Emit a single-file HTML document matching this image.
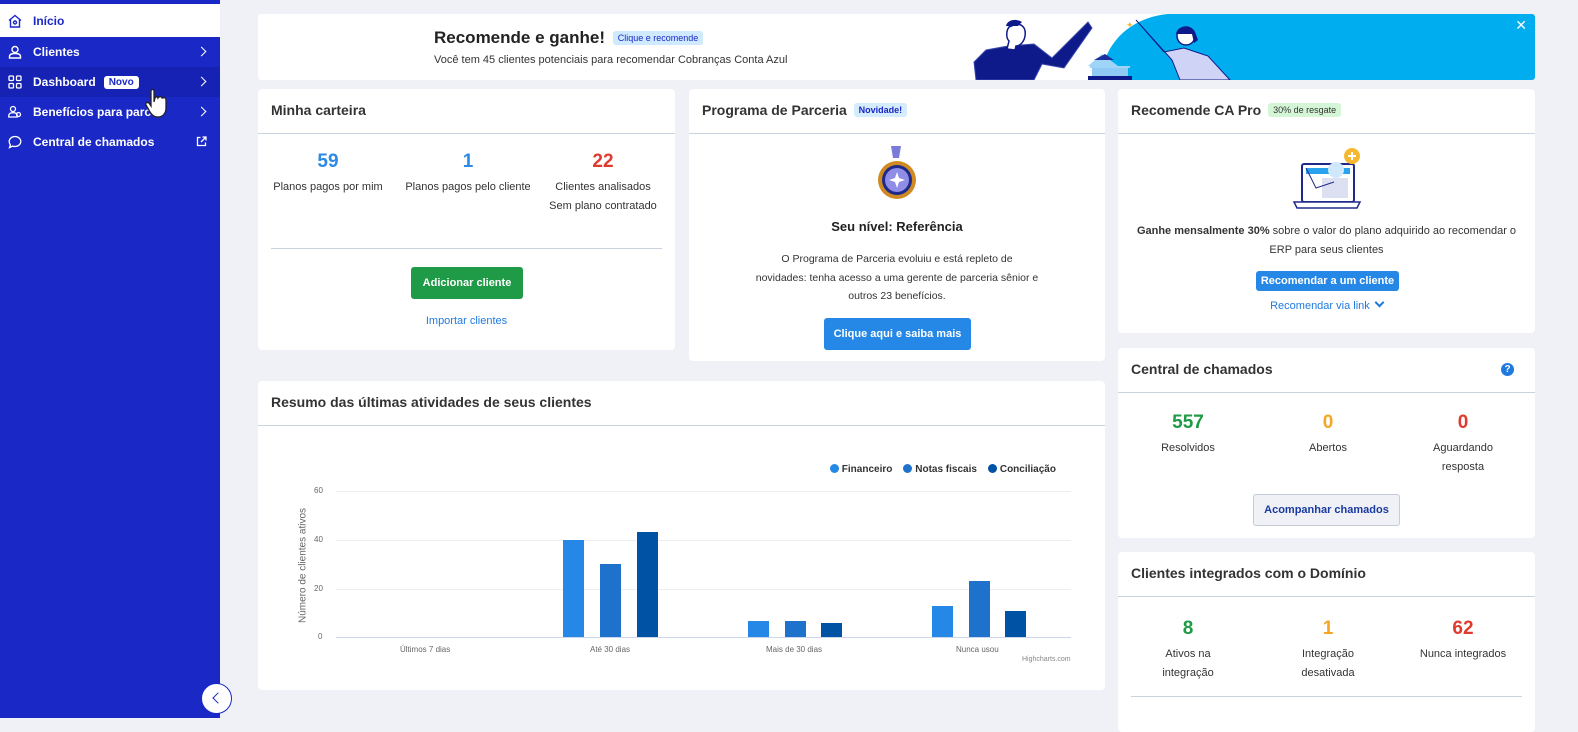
<!DOCTYPE html>
<html><head><meta charset="utf-8"><style>
*{box-sizing:border-box;margin:0;padding:0}
body{width:1578px;height:718px;overflow:hidden;background:#eff1f6;font-family:"Liberation Sans",sans-serif;color:#2b2f3a;position:relative}
.sb{position:absolute;left:0;top:0;width:220px;height:718px;background:#1a28c6}
.sb .it{position:absolute;left:0;width:220px;height:30px;color:#fff;font-size:12px;font-weight:bold;display:flex;align-items:center;padding-left:33px}
.sb .it svg{position:absolute;left:8px;top:8px}
.chev{position:absolute;right:15px;top:11px;width:7px;height:7px;border-right:1.6px solid #fff;border-top:1.6px solid #fff;transform:rotate(45deg)}
.card{position:absolute;background:#fff;border-radius:4px}
.hd{height:45px;border-bottom:1px solid #c9d3e0;padding:13px 13px;font-size:14px;font-weight:bold;color:#333}
.tag{display:inline-block;font-size:9px;padding:2px 5px;border-radius:3px;vertical-align:2px;margin-left:3px;font-weight:bold}
.c{text-align:center;position:absolute}
.num{font-size:19px;font-weight:bold}
.lbl{font-size:11px;color:#333;line-height:19px}
.btn{position:absolute;border-radius:3px;color:#fff;font-size:11px;font-weight:bold;text-align:center}
.link{position:absolute;color:#1f7ae0;font-size:11px;text-align:center}
.ax{position:absolute;font-size:8px;color:#666}
</style></head><body>
<div class="sb">
 <div style="position:absolute;left:0;top:4px;width:220px;height:33px;background:#fff"></div>
 <div class="it" style="top:6px;color:#1a28c6"><svg width="14" height="14" viewBox="0 0 14 14" fill="none" stroke="#1a28c6" stroke-width="1.4"><path d="M1 6.5 7 1.5l6 5M2.5 5.5V13h9V5.5"/><circle cx="7" cy="8.5" r="1.5"/></svg>Início</div>
 <div class="it" style="top:37px"><svg width="14" height="14" viewBox="0 0 14 14" fill="none" stroke="#fff" stroke-width="1.4"><circle cx="7" cy="4.5" r="3"/><path d="M1.5 13v-1.5c0-2 2-3 5.5-3s5.5 1 5.5 3V13z"/></svg>Clientes<span class="chev"></span></div>
 <div style="position:absolute;left:0;top:67px;width:220px;height:30px;background:#1622b3"></div>
 <div class="it" style="top:67px"><svg width="14" height="14" viewBox="0 0 14 14" fill="none" stroke="#fff" stroke-width="1.3"><rect x="1" y="1" width="4.5" height="4.5" rx="1"/><rect x="8.5" y="1" width="4.5" height="4.5" rx="1"/><rect x="1" y="8.5" width="4.5" height="4.5" rx="1"/><rect x="8.5" y="8.5" width="4.5" height="4.5" rx="1"/></svg>Dashboard<span style="background:#fff;color:#1a28c6;font-size:10px;padding:1px 5px;border-radius:3px;margin-left:8px">Novo</span><span class="chev"></span></div>
 <div class="it" style="top:97px"><svg width="14" height="14" viewBox="0 0 14 14" fill="none" stroke="#fff" stroke-width="1.3"><circle cx="5" cy="4" r="2.5"/><path d="M0.8 12v-1.5c0-1.7 1.7-2.8 4.2-2.8s4.2 1 4.2 2.8V12z"/><circle cx="10.5" cy="9.5" r="2"/></svg>Benefícios para parcei<span class="chev"></span></div>
 <div class="it" style="top:127px"><svg width="14" height="14" viewBox="0 0 14 14" fill="none" stroke="#fff" stroke-width="1.3"><path d="M7 1.5c3.3 0 5.8 2.2 5.8 5s-2.5 5-5.8 5c-.8 0-1.6-.1-2.3-.4L1.5 12.5l.9-2.6C1.6 9 1.2 7.8 1.2 6.5c0-2.8 2.5-5 5.8-5z"/></svg>Central de chamados<svg style="left:196px;top:9px" width="11" height="11" viewBox="0 0 11 11" fill="none" stroke="#fff" stroke-width="1.3"><path d="M4.5 1.5H1.5v8h8V6.5M6.5 1h3.5v3.5M10 1 5 6"/></svg></div>
 <svg style="position:absolute;left:143px;top:88px" width="26" height="34" viewBox="0 0 26 34"><path d="M8 3c0-2 3-2 3 0v11l1-4c1-2 3-1 3 0l1-1c1-1 3 0 3 1l1 0c1-1 3 0 3 2v8c0 5-3 9-8 9-4 0-6-2-8-5L3 17c-1-2 1-3 3-2l2 3z" fill="#fff" stroke="#222" stroke-width="1.3"/></svg>
 <div style="position:absolute;left:201px;top:683px;width:31px;height:31px;border-radius:50%;background:#fff;border:1.5px solid #1a28c6"></div>
 <div style="position:absolute;left:214px;top:694px;width:8px;height:8px;border-left:1.8px solid #1a28c6;border-bottom:1.8px solid #1a28c6;transform:rotate(45deg)"></div>
</div>

<!-- banner -->
<div class="card" style="left:258px;top:14px;width:1277px;height:66px;overflow:hidden;border-radius:3px">
 <svg style="position:absolute;left:0;top:0" width="1277" height="66"><path d="M842 66C846 30 870 4 910 0H1277V66z" fill="#00aeef"/></svg>
 <div style="position:absolute;left:176px;top:14px;font-size:17px;font-weight:bold;color:#222">Recomende e ganhe! <span class="tag" style="background:#cfe9ff;color:#1a28c6;font-weight:normal;font-size:9px">Clique e recomende</span></div>
 <div style="position:absolute;left:176px;top:40px;font-size:11px;color:#333">Você tem 45 clientes potenciais para recomendar Cobranças Conta Azul</div>
 <svg style="position:absolute;left:710px;top:0" width="290" height="66" viewBox="0 0 290 66">
  <path d="M8 66 6 48 18 36 40 32 66 30 84 44 120 8 124 14 96 54 74 50 66 66z" fill="#0f1a8a" stroke="#3a4ab0"/>
  <path d="M48 10c8 0 10 6 9 12-1 6-5 10-9 10l-1 4-8-1 2-8c-3-3-3-10 0-14z" fill="#fff" stroke="#0f1a8a" stroke-width="1.5"/>
  <path d="M38 12c1-6 10-8 16-4l-4 4z" fill="#0f1a8a"/>
  <path d="M120 52 134 40 150 52z" fill="#9ed4f7"/><path d="M126 46 137 40 146 46z" fill="#1c2f9c"/><rect x="122" y="52" width="40" height="2" fill="#9ed4f7"/><rect x="124" y="54" width="36" height="8" fill="#8fcaf5"/><rect x="120" y="62" width="44" height="4" fill="#0f1a8a"/>
  <path d="M168 6 196 38 216 34 240 42 262 66 212 66 204 46z" fill="#cfd3f5" stroke="#0f1a8a"/>
  <circle cx="218" cy="22" r="9" fill="#fff" stroke="#0f1a8a" stroke-width="1.5"/><path d="M208 20c1-9 15-10 19-2l3 8-4 3-2-9z" fill="#0f1a8a"/>
  <text x="158" y="14" fill="#f5b82e" font-size="9">✦</text>
 </svg>
 <div style="position:absolute;right:8px;top:3px;color:#fff;font-size:14px">✕</div>
</div>

<!-- Minha carteira -->
<div class="card" style="left:258px;top:89px;width:417px;height:261px">
 <div class="hd">Minha carteira</div>
 <div class="c" style="left:10px;width:120px;top:62px"><div class="num" style="color:#2b8ae6">59</div><div class="lbl" style="margin-top:5px">Planos pagos por mim</div></div>
 <div class="c" style="left:145px;width:130px;top:62px"><div class="num" style="color:#2b8ae6">1</div><div class="lbl" style="margin-top:5px">Planos pagos pelo cliente</div></div>
 <div class="c" style="left:280px;width:130px;top:62px"><div class="num" style="color:#e03a2e">22</div><div class="lbl" style="margin-top:5px">Clientes analisados<br>Sem plano contratado</div></div>
 <div style="position:absolute;left:13px;right:13px;top:159px;border-top:1px solid #c9d3e0"></div>
 <div class="btn" style="left:153px;top:178px;width:112px;height:32px;line-height:32px;background:#1f9a46">Adicionar cliente</div>
 <div class="link" style="left:0;width:417px;top:226px">Importar clientes</div>
</div>

<!-- Programa -->
<div class="card" style="left:689px;top:89px;width:416px;height:272px">
 <div class="hd">Programa de Parceria <span class="tag" style="background:#d4ecfb;color:#1a28c6">Novidade!</span></div>
 <svg style="position:absolute;left:188px;top:57px" width="40" height="54" viewBox="0 0 40 54"><path d="M14 0h10l-2 12h-6z" fill="#7a7ad8"/><circle cx="20" cy="34" r="19" fill="#d08a24"/><circle cx="20" cy="34" r="15" fill="#1e2a8a"/><circle cx="20" cy="34" r="12" fill="#8f8de6"/><path d="M20 26l2 6 6 2-6 2-2 6-2-6-6-2 6-2z" fill="#fff"/></svg>
 <div style="position:absolute;left:0;width:416px;top:130px;text-align:center;font-size:13px;font-weight:bold;color:#222">Seu nível: Referência</div>
 <div style="position:absolute;left:0;width:416px;top:161px;text-align:center;font-size:10.5px;line-height:18.5px;color:#333;white-space:nowrap">O Programa de Parceria evoluiu e está repleto de<br>novidades: tenha acesso a uma gerente de parceria sênior e<br>outros 23 benefícios.</div>
 <div class="btn" style="left:135px;top:229px;width:147px;height:32px;line-height:32px;background:#2688e6">Clique aqui e saiba mais</div>
</div>

<!-- Recomende CA Pro -->
<div class="card" style="left:1118px;top:89px;width:417px;height:244px">
 <div class="hd">Recomende CA Pro <span class="tag" style="background:#d5f6d6;color:#333;font-weight:normal">30% de resgate</span></div>
 <svg style="position:absolute;left:172px;top:57px" width="72" height="66" viewBox="0 0 72 66"><rect x="12" y="18" width="52" height="38" rx="2" fill="#fff" stroke="#1e2a8a" stroke-width="2"/><rect x="16" y="22" width="44" height="6" fill="#2aa3ee"/><rect x="32" y="32" width="26" height="20" fill="#dde0f0"/><path d="M4 56h66l-3 6H7z" fill="#fff" stroke="#1e2a8a" stroke-width="1.5"/><circle cx="46" cy="24" r="8" fill="#cfe8fb"/><circle cx="62" cy="10" r="8" fill="#f5b82e"/><path d="M62 6v8M58 10h8" stroke="#fff" stroke-width="2"/><path d="M16 22l10 20 18-6" fill="none" stroke="#1e2a8a"/></svg>
 <div style="position:absolute;left:10px;width:397px;top:133px;text-align:center;font-size:11px;line-height:19px;color:#333"><b>Ganhe mensalmente 30%</b> sobre o valor do plano adquirido ao recomendar o ERP para seus clientes</div>
 <div class="btn" style="left:138px;top:182px;width:143px;height:20px;line-height:20px;background:#2688e6">Recomendar a um cliente</div>
 <div class="link" style="left:0;width:417px;top:210px">Recomendar via link &nbsp;<span style="display:inline-block;width:7px;height:7px;border-right:2px solid #1f7ae0;border-bottom:2px solid #1f7ae0;transform:rotate(45deg);vertical-align:3px"></span></div>
</div>

<!-- Resumo -->
<div class="card" style="left:258px;top:381px;width:847px;height:309px">
 <div class="hd">Resumo das últimas atividades de seus clientes</div>
</div>
<div style="position:absolute;left:830px;top:464px;font-size:10px;font-weight:bold;color:#333;white-space:nowrap">
 <span style="display:inline-block;width:9px;height:9px;border-radius:50%;background:#2688e6;vertical-align:-1px"></span> Financeiro &nbsp;&nbsp; <span style="display:inline-block;width:9px;height:9px;border-radius:50%;background:#1f72cc;vertical-align:-1px"></span> Notas fiscais &nbsp;&nbsp; <span style="display:inline-block;width:9px;height:9px;border-radius:50%;background:#0052a5;vertical-align:-1px"></span> Conciliação</div>
<div style="position:absolute;left:336px;top:491px;width:735px;border-top:1px solid #eee"></div>
<div style="position:absolute;left:336px;top:540px;width:735px;border-top:1px solid #eee"></div>
<div style="position:absolute;left:336px;top:589px;width:735px;border-top:1px solid #eee"></div>
<div style="position:absolute;left:336px;top:637px;width:735px;border-top:1px solid #ccd6eb"></div>
<div class="ax" style="left:314px;top:486px">60</div><div class="ax" style="left:314px;top:535px">40</div><div class="ax" style="left:314px;top:584px">20</div><div class="ax" style="left:318px;top:632px">0</div>
<div class="ax" style="left:238px;top:560px;width:130px;font-size:10px;transform:rotate(-90deg);white-space:nowrap;text-align:center">Número de clientes ativos</div>
<div class="ax" style="left:400px;top:645px">Últimos 7 dias</div><div class="ax" style="left:590px;top:645px">Até 30 dias</div><div class="ax" style="left:766px;top:645px">Mais de 30 dias</div><div class="ax" style="left:956px;top:645px">Nunca usou</div>
<div class="ax" style="left:1022px;top:656px;font-size:7px;color:#888">Highcharts.com</div>
<div style="position:absolute;left:563px;top:540px;width:21px;height:97px;background:#2688e6"></div>
<div style="position:absolute;left:600px;top:564px;width:21px;height:73px;background:#1f72cc"></div>
<div style="position:absolute;left:637px;top:532px;width:21px;height:105px;background:#0052a5"></div>
<div style="position:absolute;left:748px;top:621px;width:21px;height:16px;background:#2688e6"></div>
<div style="position:absolute;left:785px;top:621px;width:21px;height:16px;background:#1f72cc"></div>
<div style="position:absolute;left:821px;top:623px;width:21px;height:14px;background:#0052a5"></div>
<div style="position:absolute;left:932px;top:606px;width:21px;height:31px;background:#2688e6"></div>
<div style="position:absolute;left:969px;top:581px;width:21px;height:56px;background:#1f72cc"></div>
<div style="position:absolute;left:1005px;top:611px;width:21px;height:26px;background:#0052a5"></div>

<!-- Central -->
<div class="card" style="left:1118px;top:348px;width:417px;height:190px">
 <div class="hd">Central de chamados<span style="position:absolute;right:21px;top:15px;width:13px;height:13px;border-radius:50%;background:#1f7ae0;color:#fff;font-size:10px;text-align:center;line-height:13px">?</span></div>
 <div class="c" style="left:10px;width:120px;top:64px"><div class="num" style="color:#1f9a46">557</div><div class="lbl" style="margin-top:5px">Resolvidos</div></div>
 <div class="c" style="left:145px;width:130px;top:64px"><div class="num" style="color:#f5a623">0</div><div class="lbl" style="margin-top:5px">Abertos</div></div>
 <div class="c" style="left:280px;width:130px;top:64px"><div class="num" style="color:#e03a2e">0</div><div class="lbl" style="margin-top:5px">Aguardando<br>resposta</div></div>
 <div class="btn" style="left:135px;top:146px;width:147px;height:32px;line-height:30px;background:#eff1f6;border:1px solid #c4ccd8;color:#1a3aa0">Acompanhar chamados</div>
</div>

<!-- Domínio -->
<div class="card" style="left:1118px;top:552px;width:417px;height:180px">
 <div class="hd">Clientes integrados com o Domínio</div>
 <div class="c" style="left:10px;width:120px;top:66px"><div class="num" style="color:#1f9a46">8</div><div class="lbl" style="margin-top:5px">Ativos na<br>integração</div></div>
 <div class="c" style="left:145px;width:130px;top:66px"><div class="num" style="color:#f5a623">1</div><div class="lbl" style="margin-top:5px">Integração<br>desativada</div></div>
 <div class="c" style="left:270px;width:150px;top:66px"><div class="num" style="color:#e03a2e">62</div><div class="lbl" style="margin-top:5px">Nunca integrados</div></div>
 <div style="position:absolute;left:13px;right:13px;top:144px;border-top:1px solid #c9d3e0"></div>
</div>
</body></html>
